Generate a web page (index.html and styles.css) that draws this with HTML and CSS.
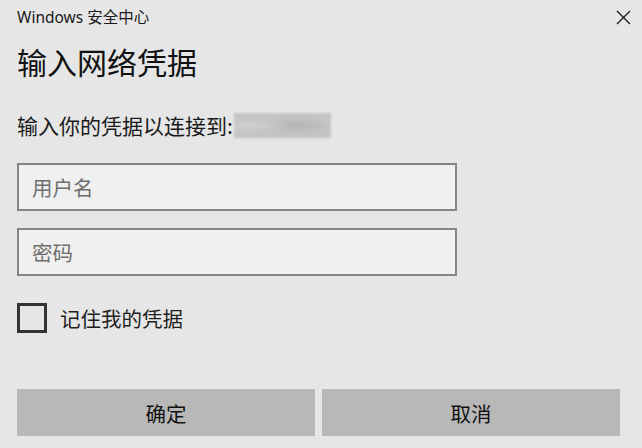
FILE: index.html
```html
<!DOCTYPE html>
<html lang="zh-CN">
<head>
<meta charset="utf-8">
<title>Windows 安全中心</title>
<link rel="stylesheet" href="styles.css">
</head>
<body>
<div class="dialog">
  <div class="titlebar">
    <span class="app-name">Windows 安全中心</span>
    <span class="close" aria-label="关闭">
      <svg width="15" height="15" viewBox="0 0 15 15"><path d="M1 1 L14 14 M14 1 L1 14" stroke="#1e1e1e" stroke-width="1.4" fill="none"/></svg>
    </span>
  </div>
  <h1 class="heading">输入网络凭据</h1>
  <p class="subtitle">输入你的凭据以连接到:<span class="blurred"></span></p>
  <input class="field" type="text" placeholder="用户名">
  <input class="field field-second" type="password" placeholder="密码">
  <label class="remember"><span class="box"></span><span class="remember-text">记住我的凭据</span></label>
  <div class="buttons">
    <button class="btn">确定</button>
    <button class="btn">取消</button>
  </div>
</div>
</body>
</html>
```
FILE: styles.css
```css
* { box-sizing: border-box; }
html, body {
  margin: 0;
  padding: 0;
  background: #e6e6e6;
}
body {
  width: 642px;
  height: 448px;
  overflow: hidden;
  font-family: "Segoe UI", "Noto Sans", "Noto Sans CJK SC", sans-serif;
  color: #1a1a1a;
}
.dialog {
  display: flex;
  flex-direction: column;
  padding: 0 22px 0 17px;
}
.titlebar {
  display: flex;
  justify-content: space-between;
  align-items: center;
  height: 20px;
  margin-top: 7px;
}
.app-name {
  font-family: "Noto Sans", "Noto Sans CJK SC", sans-serif;
  font-size: 15.5px;
  line-height: 20px;
  color: #1a1a1a;
}
.close {
  display: flex;
  margin-right: -11px;
  margin-top: 1px;
}
.heading {
  margin: 16px 0 0;
  font-family: "Noto Sans CJK SC", sans-serif;
  font-weight: 400;
  font-size: 30px;
  line-height: 36px;
  color: #111;
}
.subtitle {
  margin: 33px 0 0;
  display: flex;
  align-items: center;
  font-family: "Noto Sans CJK SC", sans-serif;
  font-size: 21px;
  line-height: 26px;
  color: #1a1a1a;
}
.blurred {
  display: inline-block;
  width: 97px;
  height: 25px;
  margin-left: 1px;
  background:
    radial-gradient(ellipse at 15% 50%, #d0d0d0 0%, rgba(208,208,208,0) 40%),
    radial-gradient(ellipse at 62% 50%, #b4b4b4 0%, rgba(180,180,180,0) 45%),
    #c4c4c4;
  filter: blur(1px);
}
.field {
  width: 440px;
  height: 48px;
  margin: 25px 0 0;
  padding: 0 0 0 13px;
  border: 2px solid #868686;
  background: #f0f0f0;
  font-family: "Noto Sans CJK SC", sans-serif;
  font-size: 20.5px;
  color: #222;
  outline: none;
}
.field::placeholder {
  color: #6e6e6e;
}
.field-second {
  margin-top: 17px;
}
.remember {
  display: flex;
  align-items: center;
  margin-top: 27px;
  height: 30px;
}
.box {
  width: 30px;
  height: 30px;
  border: 3px solid #333;
}
.remember-text {
  margin-left: 13px;
  font-family: "Noto Sans CJK SC", sans-serif;
  font-size: 20.5px;
  line-height: 26px;
  color: #1e1e1e;
}
.buttons {
  display: flex;
  gap: 7px;
  margin-top: 56px;
  margin-right: -1px;
}
.btn {
  width: 298px;
  height: 47px;
  border: 0;
  background: #b8b8b8;
  font-family: "Noto Sans CJK SC", sans-serif;
  font-size: 20.5px;
  color: #111;
  padding: 0;
}
```
